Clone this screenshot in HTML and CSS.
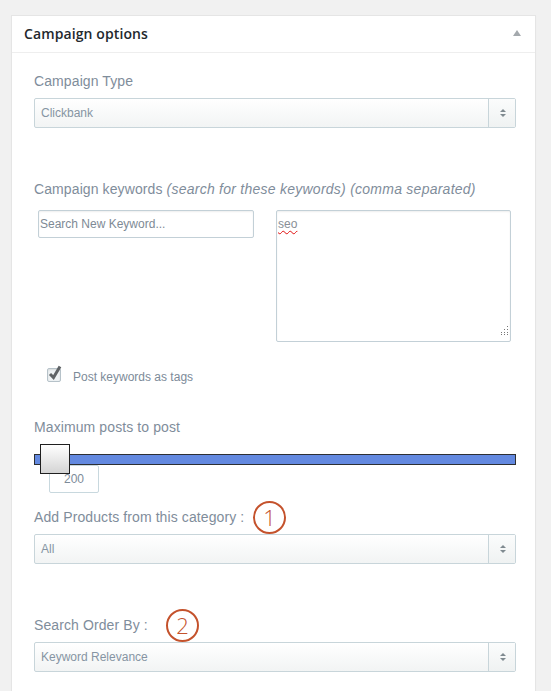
FILE: index.html
```html
<!DOCTYPE html>
<html>
<head>
<meta charset="utf-8">
<title>Campaign options</title>
<link rel="stylesheet" href="styles.css">
</head>
<body>
<div class="postbox">
  <div class="hndle">
    <h2 class="title">Campaign options</h2>
    <svg class="toggle" width="8" height="6" viewBox="0 0 8 6"><polygon points="0,6 4,0 8,6" fill="#a4a9ad"/></svg>
  </div>
  <div class="inside">
    <div class="label label-first">Campaign Type</div>
    <div class="select">
      <span class="select-value">Clickbank</span>
      <span class="select-arrow"><svg width="8" height="10" viewBox="0 0 8 10"><polygon points="1,4 4,1 7,4" fill="#7f8a90"/><polygon points="1,6 4,9 7,6" fill="#7f8a90"/></svg></span>
    </div>

    <div class="label label-keywords">Campaign keywords <em>(search for these keywords) (comma separated)</em></div>
    <div class="keyword-row">
      <div class="input"><span class="placeholder">Search New Keyword...</span></div>
      <div class="textarea">
        <span class="misspelled">seo</span>
        <svg class="grip" width="9" height="9" viewBox="0 0 9 9">
          <rect x="8" y="0" width="1" height="1" fill="#777"/>
          <rect x="8" y="3" width="1" height="1" fill="#777"/>
          <rect x="5" y="3" width="1" height="1" fill="#777"/>
          <rect x="8" y="6" width="1" height="1" fill="#777"/>
          <rect x="5" y="6" width="1" height="1" fill="#777"/>
          <rect x="2" y="6" width="1" height="1" fill="#777"/>
          <rect x="8" y="8" width="1" height="1" fill="#777"/>
          <rect x="5" y="8" width="1" height="1" fill="#777"/>
          <rect x="2" y="8" width="1" height="1" fill="#777"/>
        </svg>
      </div>
    </div>

    <div class="check-row">
      <span class="checkbox">
        <svg class="checkmark" width="16" height="17" viewBox="0 0 16 17"><path d="M3 9 L6.5 12.5 L13 1.5" fill="none" stroke="#5f6366" stroke-width="3" stroke-linejoin="miter"/></svg>
      </span>
      <span class="check-label">Post keywords as tags</span>
    </div>

    <div class="label label-max">Maximum posts to post</div>
    <div class="slider">
      <div class="track"></div>
      <div class="handle"></div>
      <div class="slider-value">200</div>
    </div>

    <div class="label label-cat">
      Add Products from this category :
      <span class="badge badge-one">1</span>
    </div>
    <div class="select">
      <span class="select-value">All</span>
      <span class="select-arrow"><svg width="8" height="10" viewBox="0 0 8 10"><polygon points="1,4 4,1 7,4" fill="#7f8a90"/><polygon points="1,6 4,9 7,6" fill="#7f8a90"/></svg></span>
    </div>

    <div class="label label-order">
      Search Order By :
      <span class="badge badge-two">2</span>
    </div>
    <div class="select">
      <span class="select-value">Keyword Relevance</span>
      <span class="select-arrow"><svg width="8" height="10" viewBox="0 0 8 10"><polygon points="1,4 4,1 7,4" fill="#7f8a90"/><polygon points="1,6 4,9 7,6" fill="#7f8a90"/></svg></span>
    </div>
  </div>
</div>
</body>
</html>
```

FILE: styles.css
```css
html, body {
  margin: 0;
  padding: 0;
}
body {
  background: #f1f1f1;
  font-family: "Liberation Sans", Arial, sans-serif;
  overflow: hidden;
}
.postbox {
  margin: 15px 0 0 11px;
  width: 523px;
  min-height: 700px;
  background: #fff;
  border: 1px solid #e5e5e5;
  box-shadow: 0 1px 1px rgba(0, 0, 0, 0.04);
}
.hndle {
  height: 36px;
  border-bottom: 1px solid #eeeeee;
  display: flex;
  align-items: center;
  justify-content: space-between;
  padding: 0 14px 0 12px;
}
.title {
  margin: 0;
  font-family: "Open Sans", "Liberation Sans", sans-serif;
  font-weight: 600;
  font-size: 14px;
  letter-spacing: 0.1px;
  color: #23282d;
  line-height: 20px;
}
.toggle {
  display: block;
  margin-top: -2px;
}
.inside {
  padding: 18px 18px 0 22px;
}
.label {
  position: relative;
  font-size: 14px;
  line-height: 20px;
  letter-spacing: 0.1px;
  color: #7f8d9b;
  margin-bottom: 7px;
}
.label em {
  font-style: italic;
  letter-spacing: 0.25px;
}
.label-keywords {
  margin-top: 51px;
  margin-bottom: 11px;
}
.label-max {
  margin-top: 32px;
}
.label-cat {
  margin-top: 14px;
}
.label-order {
  margin-top: 51px;
}
.select {
  box-sizing: border-box;
  height: 30px;
  width: 482px;
  display: flex;
  border: 1px solid #c8d5da;
  border-radius: 2px;
  background: linear-gradient(#ffffff, #f2f4f4);
}
.select-value {
  flex: 1;
  padding-left: 6px;
  font-size: 12px;
  line-height: 28px;
  color: #8695a3;
}
.select-arrow {
  width: 26px;
  border-left: 1px solid #c8d5da;
  display: flex;
  align-items: center;
  justify-content: center;
  background: linear-gradient(#fbfcfc, #eff2f2);
}
.select-arrow svg {
  display: block;
  margin-left: 1px;
}
.keyword-row {
  display: flex;
  align-items: flex-start;
}
.input {
  box-sizing: border-box;
  margin-left: 4px;
  width: 216px;
  height: 28px;
  border: 1px solid #c3d0d7;
  border-radius: 2px;
  box-shadow: inset 0 1px 2px rgba(0, 0, 0, 0.07);
  padding: 0 1px;
  font-size: 12px;
  line-height: 26px;
  color: #7e8a95;
}
.textarea {
  position: relative;
  box-sizing: border-box;
  margin-left: 22px;
  width: 235px;
  height: 132px;
  border: 1px solid #c3d0d7;
  border-radius: 2px;
  box-shadow: inset 0 1px 2px rgba(0, 0, 0, 0.07);
  padding: 6px 1px;
  font-size: 12px;
  line-height: 14px;
  color: #888f96;
}
.misspelled {
  text-decoration: underline wavy #e01010;
  text-decoration-thickness: 1px;
  text-underline-offset: 2px;
}
.grip {
  position: absolute;
  right: 2px;
  bottom: 6px;
}
.check-row {
  display: flex;
  align-items: flex-start;
  margin-top: 26px;
}
.checkbox {
  position: relative;
  box-sizing: border-box;
  margin-left: 13px;
  width: 14px;
  height: 14px;
  border: 1px solid #b6c2c9;
  border-radius: 2px;
  background: #eef2f4;
  box-shadow: inset 0 1px 2px rgba(0, 0, 0, 0.1);
}
.checkmark {
  position: absolute;
  left: -1px;
  top: -4px;
}
.check-label {
  margin-left: 12px;
  margin-top: 1px;
  font-size: 12px;
  line-height: 16px;
  color: #7d8b99;
}
.slider {
  position: relative;
  padding-top: 10px;
}
.track {
  box-sizing: border-box;
  height: 11px;
  width: 482px;
  background: #6389e0;
  border: 1px solid #2d2f33;
}
.handle {
  position: absolute;
  left: 6px;
  top: 0;
  box-sizing: border-box;
  width: 30px;
  height: 30px;
  border: 1px solid #1f1f1f;
  background: linear-gradient(#ffffff, #d4d4d4);
  z-index: 2;
}
.slider-value {
  box-sizing: border-box;
  margin-left: 15px;
  width: 50px;
  height: 28px;
  border: 1px solid #c8d8de;
  border-radius: 2px;
  background: #fff;
  text-align: center;
  font-size: 12px;
  line-height: 26px;
  color: #7d8b99;
}
.badge {
  position: absolute;
  top: -6px;
  box-sizing: border-box;
  width: 33px;
  height: 33px;
  border: 2px solid #c4522c;
  border-radius: 50%;
  text-align: center;
  font-family: "Open Sans", "Liberation Sans", sans-serif;
  font-weight: 300;
  font-size: 22px;
  line-height: 29px;
  letter-spacing: 0;
  color: #c4522c;
}
.badge-one {
  left: 219px;
}
.badge-two {
  left: 132px;
}
```
